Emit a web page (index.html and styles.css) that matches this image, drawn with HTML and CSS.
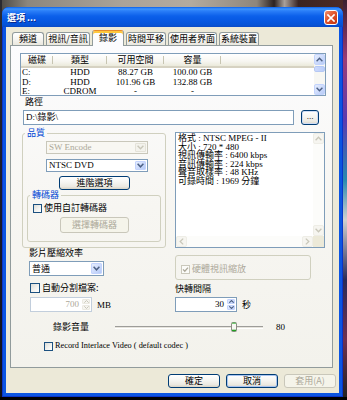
FILE: index.html
```html
<!DOCTYPE html>
<html lang="zh-Hant">
<head>
<meta charset="utf-8">
<title>選項</title>
<link rel="stylesheet" href="styles.css">
</head>
<body>
<div class="window">
  <div class="titlebar">
    <span class="title">選項 ...</span>
    <span class="close"><svg width="8" height="8" viewBox="0 0 8 8"><path d="M1 1L7 7M7 1L1 7" stroke="#fff" stroke-width="1.7" stroke-linecap="square"/></svg></span>
  </div>
  <div class="client">
    <div class="tabs">
      <div class="tab w32">頻道</div>
      <div class="tab w44">視訊/音訊</div>
      <div class="tab sel w32">錄影</div>
      <div class="tab w40">時間平移</div>
      <div class="tab w49">使用者界面</div>
      <div class="tab w40">系統裝置</div>
    </div>
    <div class="panel">
      <div class="list">
        <div class="list-body">
          <div class="lv-head">
            <div class="c1">磁碟</div><div class="c2">類型</div><div class="c3">可用空間</div><div class="c4">容量</div><div class="c5"></div>
          </div>
          <div class="lv-row"><div class="c1 left">C:</div><div class="c2">HDD</div><div class="c3">88.27 GB</div><div class="c4">100.00 GB</div></div>
          <div class="lv-row"><div class="c1 left">D:</div><div class="c2">HDD</div><div class="c3">101.96 GB</div><div class="c4">132.88 GB</div></div>
          <div class="lv-row"><div class="c1 left">E:</div><div class="c2">CDROM</div><div class="c3">-</div><div class="c4">-</div></div>
        </div>
        <div class="vscroll">
          <div class="sarrow"><svg width="7" height="5" viewBox="0 0 7 5"><path d="M0.6 4.2L3.5 1.2L6.4 4.2" fill="none" stroke="#4d6185" stroke-width="1.4"/></svg></div>
          <div class="sthumb"></div>
          <div class="sfill"></div>
          <div class="sarrow"><svg width="7" height="5" viewBox="0 0 7 5"><path d="M0.6 0.8L3.5 3.8L6.4 0.8" fill="none" stroke="#4d6185" stroke-width="1.4"/></svg></div>
        </div>
      </div>

      <div class="path-label">路徑</div>
      <div class="path-row">
        <div class="textbox">D:\錄影\</div>
        <div class="btn dots">...</div>
      </div>

      <div class="mid-row">
        <fieldset class="group quality">
          <legend>品質</legend>
          <div class="combo disabled sw"><span class="val">SW Encode</span><span class="dd"><svg width="7" height="5" viewBox="0 0 7 5"><path d="M0.6 0.8L3.5 3.8L6.4 0.8" fill="none" stroke="#c9c7ba" stroke-width="1.4"/></svg></span></div>
          <div class="combo ntsc"><span class="val">NTSC DVD</span><span class="dd"><svg width="7" height="5" viewBox="0 0 7 5"><path d="M0.6 0.8L3.5 3.8L6.4 0.8" fill="none" stroke="#4d6185" stroke-width="1.5"/></svg></span></div>
          <div class="btn adv">進階選項</div>
          <fieldset class="group codec">
            <legend>轉碼器</legend>
            <div class="check-row codec-check"><span class="cb"></span><span>使用自訂轉碼器</span></div>
            <div class="btn disabled pick">選擇轉碼器</div>
          </fieldset>
        </fieldset>
        <div class="info">
          <div class="info-text">
            <div>格式 : NTSC MPEG - II</div>
            <div>大小 : 720 * 480</div>
            <div>視訊傳輸率 : 6400 kbps</div>
            <div>音訊傳輸率 : 224 kbps</div>
            <div>聲音取樣率 : 48 KHz</div>
            <div>可錄時間 : 1969 分鐘</div>
          </div>
          <div class="ivscroll">
            <div class="darrow"><svg width="7" height="5" viewBox="0 0 7 5"><path d="M0.6 4.2L3.5 1.2L6.4 4.2" fill="none" stroke="#c9c7ba" stroke-width="1.3"/></svg></div>
            <div class="sfill"></div>
            <div class="darrow"><svg width="7" height="5" viewBox="0 0 7 5"><path d="M0.6 0.8L3.5 3.8L6.4 0.8" fill="none" stroke="#c9c7ba" stroke-width="1.3"/></svg></div>
          </div>
          <div class="ihscroll">
            <div class="darrow"><svg width="5" height="7" viewBox="0 0 5 7"><path d="M4.2 0.6L1.2 3.5L4.2 6.4" fill="none" stroke="#c9c7ba" stroke-width="1.3"/></svg></div>
            <div class="sfill"></div>
            <div class="darrow"><svg width="5" height="7" viewBox="0 0 5 7"><path d="M0.8 0.6L3.8 3.5L0.8 6.4" fill="none" stroke="#c9c7ba" stroke-width="1.3"/></svg></div>
          </div>
          <div class="corner"></div>
        </div>
      </div>

      <div class="lower">
        <div class="col-left">
          <div class="lbl">影片壓縮效率</div>
          <div class="combo eff"><span class="val">普通</span><span class="dd"><svg width="7" height="5" viewBox="0 0 7 5"><path d="M0.6 0.8L3.5 3.8L6.4 0.8" fill="none" stroke="#4d6185" stroke-width="1.5"/></svg></span></div>
          <div class="check-row split"><span class="cb"></span><span>自動分割檔案:</span></div>
          <div class="spin-row">
            <div class="spin disabled"><span class="v">700</span><span class="arrows"><span class="sa"><svg width="5" height="3" viewBox="0 0 5 3"><path d="M0.3 2.7L2.5 0.5L4.7 2.7" fill="none" stroke="#c9c7ba" stroke-width="1"/></svg></span><span class="sa"><svg width="5" height="3" viewBox="0 0 5 3"><path d="M0.3 0.3L2.5 2.5L4.7 0.3" fill="none" stroke="#c9c7ba" stroke-width="1"/></svg></span></span></div>
            <span>MB</span>
          </div>
        </div>
        <div class="col-right">
          <div class="hw-group"><span class="cb checked"><svg width="7" height="7" viewBox="0 0 7 7"><path d="M1 3.4L2.8 5.2L6 1.6" fill="none" stroke="#aca899" stroke-width="1.3"/></svg></span><span class="dis-text">硬體視訊縮放</span></div>
          <div class="lbl ff">快轉間隔</div>
          <div class="spin-row">
            <div class="spin"><span class="v">30</span><span class="arrows"><span class="sa"><svg width="5" height="3" viewBox="0 0 5 3"><path d="M0.3 2.7L2.5 0.5L4.7 2.7" fill="none" stroke="#4d6185" stroke-width="1.1"/></svg></span><span class="sa"><svg width="5" height="3" viewBox="0 0 5 3"><path d="M0.3 0.3L2.5 2.5L4.7 0.3" fill="none" stroke="#4d6185" stroke-width="1.1"/></svg></span></span></div>
            <span>秒</span>
          </div>
        </div>
      </div>

      <div class="vol-row">
        <span class="vol-label">錄影音量</span>
        <div class="track">
          <span class="thumb"><svg width="6" height="10" viewBox="0 0 6 10"><rect x="0.5" y="0.5" width="5" height="9" rx="1" fill="#f7f7f2" stroke="#8c8c84"/><path d="M1 1.2H5" stroke="#3fb53f" stroke-width="1"/><path d="M1 8.4H5" stroke="#21a121" stroke-width="1.4"/></svg></span>
        </div>
        <span class="vol-val">80</span>
      </div>

      <div class="check-row rec"><span class="cb"></span><span class="rec-text">Record Interlace Video ( default codec )</span></div>
    </div>

    <div class="buttons">
      <div class="btn bb">確定</div>
      <div class="btn bb focus">取消</div>
      <div class="btn bb disabled">套用(A)</div>
    </div>
  </div>
</div>
</body>
</html>
```

FILE: styles.css
```css
* { box-sizing: border-box; }
html, body { margin: 0; padding: 0; }
body {
  width: 347px;
  height: 400px;
  overflow: hidden;
  font-family: "Liberation Serif", "Noto Sans CJK TC", serif;
  font-size: 9px;
  line-height: 10px;
  color: #000;
  background:
    linear-gradient(#000, #000) 0 397px / 100% 3px no-repeat,
    linear-gradient(to bottom, #3a2030 0%, #9a3c78 15%, #5a3ab0 30%, #2a8ab0 45%, #d0d0d0 55%, #2a2a58 70%, #703050 85%, #202020 100%) 343px 0 / 4px 400px no-repeat,
    linear-gradient(to bottom, #2a2a30 0%, #1a1a2a 50%, #101018 100%) 0 0 / 2px 400px no-repeat,
    linear-gradient(to right, #4a4844 0%, #8c877e 8%, #aaa399 35%, #b3ab9f 55%, #8e867b 74%, #2c2220 79%, #a8a09a 82%, #3a2522 86%, #4e2a28 100%);
}

/* ---------- window frame ---------- */
.window {
  margin: 7px 0 0 2px;
  width: 341px;
  height: 390px;
  background: #0b55e2;
  border-radius: 7px 7px 0 0;
  box-shadow: inset 1px 0 #0a34c8, inset -1px 0 #0a34c8, inset 0 -1px #0a34c8;
  display: flex;
  flex-direction: column;
}
.titlebar {
  height: 20px;
  flex: none;
  display: flex;
  align-items: center;
  padding: 0 5px 0 5px;
  border-radius: 7px 7px 0 0;
  background: linear-gradient(to bottom, #0a5fe8 0%, #3d95ff 10%, #2a7ef8 20%, #0c60ea 45%, #0657e2 70%, #0553d8 88%, #0a4ac6 100%);
}
.title {
  color: #fff;
  font-family: "Noto Sans CJK TC", sans-serif;
  font-weight: bold;
  font-size: 9px;
  line-height: 10px;
  text-shadow: 1px 1px 0 #0c2a8c;
  padding-top: 1px;
}
.close {
  margin-left: auto;
  width: 14px;
  height: 15px;
  margin-top: 1px;
  border: 1px solid #fff;
  border-radius: 3px;
  background: linear-gradient(135deg, #f0906e 0%, #e35c34 40%, #d1401a 75%, #c13510 100%);
  display: flex;
  align-items: center;
  justify-content: center;
}
.client {
  margin: 0 4px;
  height: 366px;
  background: #ece9d8;
  padding: 3px 0 0 4px;
  display: flex;
  flex-direction: column;
}

/* ---------- tabs ---------- */
.tabs {
  height: 15px;
  flex: none;
  display: flex;
  align-items: flex-start;
  gap: 2px;
  padding-left: 2px;
}
.tab {
  height: 13px;
  margin-top: 2px;
  border: 1px solid #919b9c;
  border-bottom: 0;
  border-radius: 3px 3px 0 0;
  background: linear-gradient(to bottom, #ffffff 0%, #f6f5f1 50%, #e9e7de 100%);
  text-align: center;
  line-height: 12px;
  font-family: "Noto Sans CJK TC", sans-serif;
  white-space: nowrap;
}
.tab.sel {
  height: 16px;
  margin-top: 0;
  position: relative;
  z-index: 1;
  background: #fcfcfe;
  border-top-color: #e68b2c;
  box-shadow: inset 0 2px 0 #ffc83c;
  line-height: 12px;
  padding-top: 1px;
}
.w32 { width: 32px; }
.w40 { width: 40px; }
.w44 { width: 44px; }
.w49 { width: 49px; }

/* ---------- panel ---------- */
.panel {
  width: 323px;
  height: 323px;
  flex: none;
  border: 1px solid #919b9c;
  background: linear-gradient(to bottom, #fcfcfe 0%, #f7f6f2 50%, #f3f2ec 100%);
  padding: 7px 0 0 9px;
}

/* list view */
.list {
  width: 306px;
  height: 43px;
  border: 1px solid #7f9db9;
  background: #fff;
  display: flex;
  overflow: hidden;
}
.list-body { flex: 1; overflow: hidden; }
.lv-head {
  display: flex;
  height: 14px;
  background: linear-gradient(to bottom, #ffffff 0%, #f7f6f1 60%, #ebeadb 100%);
  border-bottom: 2px solid #d6d2c2;
  line-height: 12px;
  font-family: "Noto Sans CJK TC", sans-serif;
}
.lv-head > div {
  text-align: center;
  background: linear-gradient(#c7c5b2, #c7c5b2) right 2px / 1px 8px no-repeat;
}
.lv-head > .c5 { flex: 1; background: none; }
.lv-row { display: flex; height: 9.5px; line-height: 9.5px; }
.lv-row > div { text-align: center; white-space: nowrap; }
.c1 { width: 32px; flex: none; }
.c2 { width: 54px; flex: none; }
.c3 { width: 57px; flex: none; }
.c4 { width: 57px; flex: none; }
.lv-row > .left { text-align: left; padding-left: 1px; }

.vscroll {
  width: 11px;
  flex: none;
  display: flex;
  flex-direction: column;
  background: #f7f7f3;
}
.sarrow {
  height: 11px;
  flex: none;
  border: 1px solid #c3d3fd;
  border-radius: 2px;
  background: linear-gradient(135deg, #e6eefe 0%, #c9d8fb 60%, #b8ccf6 100%);
  display: flex;
  align-items: center;
  justify-content: center;
}
.sthumb {
  height: 6px;
  flex: none;
  margin-top: 1px;
  border: 1px solid #b5c8f4;
  border-radius: 2px;
  background: linear-gradient(to right, #cdd9fc, #b9cdf9);
}
.sfill { flex: 1; }

/* path */
.path-label {
  margin: 1px 0 0 5px;
  line-height: 10px;
  font-family: "Noto Sans CJK TC", sans-serif;
}
.path-row {
  margin: 3px 0 0 3px;
  display: flex;
  gap: 7px;
}
.textbox {
  width: 271px;
  height: 15px;
  border: 1px solid #7f9db9;
  background: #fff;
  padding-left: 2px;
  line-height: 13px;
}

/* buttons */
.btn {
  border: 1px solid #003c74;
  border-radius: 3px;
  background: linear-gradient(to bottom, #ffffff 0%, #f5f5f1 45%, #ebe9e1 80%, #d9d4c6 100%);
  text-align: center;
  font-family: "Noto Sans CJK TC", sans-serif;
  white-space: nowrap;
}
.btn.disabled {
  border-color: #c9c7ba;
  background: #f5f4ea;
  color: #aca899;
}
.dots {
  width: 18px;
  height: 15px;
  line-height: 11px;
  font-family: "Liberation Serif", serif;
  box-shadow: inset 0 0 0 1px #cfdcf5;
}

/* group boxes */
.mid-row {
  margin-top: 3px;
  display: flex;
  align-items: flex-start;
}
fieldset.group {
  margin: 0;
  padding: 0;
  min-width: 0;
  border: 1px solid #d0d0bf;
  border-radius: 3px;
}
fieldset.group > legend {
  padding: 0 2px;
  margin-left: 2px;
  line-height: 10px;
  color: #0046d5;
  font-family: "Noto Sans CJK TC", sans-serif;
}
.quality {
  margin-left: 2px !important;
  width: 144px;
  padding-bottom: 5px !important;
}
.codec {
  margin: 0 4px !important;
  padding-bottom: 8px !important;
}
.codec > legend { margin-left: 3px; }

.combo {
  display: flex;
  border: 1px solid #7f9db9;
  background: #fff;
}
.combo .val {
  flex: 1;
  padding-left: 2px;
  white-space: nowrap;
}
.combo .dd {
  width: 11px;
  margin: 1px;
  border: 1px solid #c3d3fd;
  border-radius: 1px;
  background: linear-gradient(135deg, #e6eefe 0%, #c9d8fb 60%, #b4c9f6 100%);
  display: flex;
  align-items: center;
  justify-content: center;
}
.combo.disabled {
  border-color: #c9c7ba;
  background: #f8f7f2;
  color: #aca899;
}
.combo.disabled .dd {
  border-color: #e4e2d8;
  background: #f3f2ec;
}
.sw, .ntsc {
  width: 102px;
  height: 13px;
  margin-left: 23px;
  line-height: 11px;
}
.sw { margin-top: 3px; }
.ntsc { margin-top: 5px; }
.adv {
  width: 71px;
  height: 14px;
  margin: 4px 0 0 36px;
  line-height: 12px;
}
.check-row {
  display: flex;
  align-items: center;
  gap: 2px;
  height: 10px;
  font-family: "Noto Sans CJK TC", sans-serif;
  white-space: nowrap;
}
.cb {
  width: 9px;
  height: 9px;
  flex: none;
  border: 1px solid #1c5180;
  background: linear-gradient(135deg, #dcdcd7 0%, #f4f4f1 60%, #ffffff 100%);
  display: flex;
  align-items: center;
  justify-content: center;
}
.cb.checked {
  border-color: #cac8bb;
  background: #fbfbf8;
}
.codec-check { margin: 3px 0 0 5px; }
.pick {
  width: 69px;
  height: 16px;
  margin: 4px 0 0 32px;
  line-height: 14px;
}

/* info box */
.info {
  margin: 4px 0 0 9px;
  width: 150px;
  height: 116px;
  border: 1px solid #7f9db9;
  background: #fff;
  display: grid;
  grid-template-columns: 1fr 11px;
  grid-template-rows: 1fr 11px;
}
.info-text {
  padding: 1px 0 0 2px;
  line-height: 8.5px;
  white-space: nowrap;
  overflow: hidden;
}
.ivscroll {
  display: flex;
  flex-direction: column;
  background: #fcfcfa;
}
.ihscroll {
  display: flex;
  background: #fcfcfa;
}
.darrow {
  flex: none;
  width: 11px;
  height: 11px;
  border: 1px solid #eeede6;
  border-radius: 2px;
  background: #f6f5f0;
  display: flex;
  align-items: center;
  justify-content: center;
}
.corner { background: #ece9d8; }

/* lower area */
.lower { display: flex; }
.col-left {
  margin-left: 9px;
  width: 146px;
  flex: none;
}
.lbl {
  line-height: 10px;
  font-family: "Noto Sans CJK TC", sans-serif;
}
.eff {
  width: 75px;
  height: 15px;
  margin-top: 3px;
  line-height: 13px;
  font-family: "Noto Sans CJK TC", sans-serif;
}
.split { margin: 7px 0 0 1px; }
.split .cb { width: 10px; height: 10px; }
.spin-row {
  display: flex;
  align-items: center;
  gap: 5px;
  margin-top: 4px;
  margin-left: 1px;
  font-family: "Liberation Serif", "Noto Sans CJK TC", serif;
}
.spin {
  width: 62px;
  height: 15px;
  display: flex;
  border: 1px solid #7f9db9;
  background: #fff;
}
.spin .v {
  flex: 1;
  text-align: right;
  padding-right: 2px;
  line-height: 13px;
}
.spin .arrows {
  width: 10px;
  display: flex;
  flex-direction: column;
  padding: 1px;
  gap: 1px;
}
.spin .sa {
  flex: 1;
  border: 1px solid #c3d3fd;
  border-radius: 1px;
  background: linear-gradient(135deg, #e6eefe, #c3d4fb);
  display: flex;
  align-items: center;
  justify-content: center;
}
.spin.disabled {
  border-color: #c2cedc;
  color: #aca899;
}
.spin.disabled .sa {
  border-color: #eceae2;
  background: #f6f5f0;
}

.col-right { width: 140px; flex: none; }
.hw-group {
  margin-top: 7px;
  width: 136px;
  height: 25px;
  border: 1px solid #d0d0bf;
  border-radius: 3px;
  display: flex;
  align-items: center;
  gap: 2px;
  padding: 3px 0 0 5px;
  font-family: "Noto Sans CJK TC", sans-serif;
}
.dis-text { color: #aca899; }
.ff { margin-top: 4px; }
.col-right .spin-row { margin-top: 3px; margin-left: 0; }
.col-left .spin-row { margin-top: 4px; }

/* volume */
.vol-row {
  margin: 10px 0 0 33px;
  height: 10px;
  display: flex;
  align-items: center;
  font-family: "Noto Sans CJK TC", sans-serif;
}
.vol-label { width: 62px; flex: none; }
.track {
  position: relative;
  width: 148px;
  height: 3px;
  border-top: 1px solid #9d9c99;
  border-bottom: 1px solid #ffffff;
  background: #e6e4dc;
}
.thumb {
  position: absolute;
  left: 116px;
  top: -5px;
  width: 6px;
  height: 10px;
  display: block;
}
.thumb svg { display: block; }
.vol-val {
  margin-left: 13px;
  font-family: "Liberation Serif", serif;
}

.rec { margin: 9px 0 0 24px; }
.rec-text {
  font-family: "Liberation Serif", serif;
  font-size: 8.3px;
}

/* bottom buttons */
.buttons {
  margin-top: 6px;
  display: flex;
  justify-content: flex-end;
  gap: 6px;
  padding-right: 3px;
}
.bb {
  width: 52px;
  height: 14px;
  line-height: 12px;
}
.bb.focus { box-shadow: inset 0 0 0 1px #a8c4f0; }
```
